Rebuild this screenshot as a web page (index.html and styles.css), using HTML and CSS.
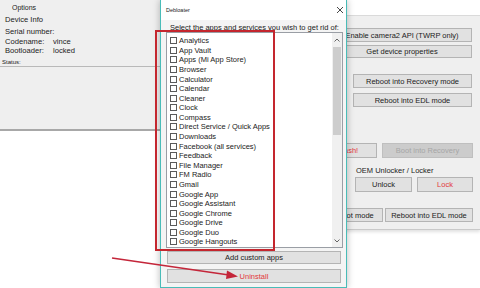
FILE: index.html
```html
<!DOCTYPE html>
<html lang="en">
<head>
  <meta charset="UTF-8" />
  <title>Debloater</title>
  <link rel="stylesheet" href="styles.css">
</head>
<body>
<div class="desktop">

  <div class="app">
    <div class="side">
      <div class="tab">Options</div>
      <div class="info">
        <div class="info-title">Device Info</div>
        <div class="info-row">Serial number:</div>
        <div class="info-row"><span class="key">Codename:</span>vince</div>
        <div class="info-row"><span class="key">Bootloader:</span>locked</div>
      </div>
      <div class="status">Status:</div>
    </div>

    <div class="tools">
      <div class="tools-head"></div>
      <div class="tools-body">
        <div class="btn wide first">Enable camera2 API (TWRP only)</div>
        <div class="btn wide second">Get device properties</div>
        <div class="btn reboot rec">Reboot into Recovery mode</div>
        <div class="btn reboot edl">Reboot into EDL mode</div>
        <div class="tool-row flash-row">
          <div class="btn red flash">Flash!</div>
          <div class="btn disabled boot-rec">Boot into Recovery</div>
        </div>
        <div class="oem-label">OEM Unlocker / Locker</div>
        <div class="tool-row oem-row">
          <div class="btn unlock">Unlock</div>
          <div class="btn red lock">Lock</div>
        </div>
        <div class="tool-row mode-row">
          <div class="btn fastboot">Reboot into Fastboot mode</div>
          <div class="btn edl-2">Reboot into EDL mode</div>
        </div>
      </div>
    </div>
  </div>

  <div class="dialog">
    <div class="dialog-title">
      <span>Debloater</span>
      <svg class="close" width="8" height="8" viewBox="0 0 8 8">
        <path d="M1 1 L7 7 M7 1 L1 7" stroke="#333" stroke-width="0.9" fill="none"/>
      </svg>
    </div>
    <div class="dialog-body">
      <div class="prompt">Select the apps and services you wish to get rid of:</div>
      <div class="listbox">
        <div class="items">
          <div class="item"><span class="box"></span>Analytics</div>
          <div class="item"><span class="box"></span>App Vault</div>
          <div class="item"><span class="box"></span>Apps (Mi App Store)</div>
          <div class="item"><span class="box"></span>Browser</div>
          <div class="item"><span class="box"></span>Calculator</div>
          <div class="item"><span class="box"></span>Calendar</div>
          <div class="item"><span class="box"></span>Cleaner</div>
          <div class="item"><span class="box"></span>Clock</div>
          <div class="item"><span class="box"></span>Compass</div>
          <div class="item"><span class="box"></span>Direct Service / Quick Apps</div>
          <div class="item"><span class="box"></span>Downloads</div>
          <div class="item"><span class="box"></span>Facebook (all services)</div>
          <div class="item"><span class="box"></span>Feedback</div>
          <div class="item"><span class="box"></span>File Manager</div>
          <div class="item"><span class="box"></span>FM Radio</div>
          <div class="item"><span class="box"></span>Gmail</div>
          <div class="item"><span class="box"></span>Google App</div>
          <div class="item"><span class="box"></span>Google Assistant</div>
          <div class="item"><span class="box"></span>Google Chrome</div>
          <div class="item"><span class="box"></span>Google Drive</div>
          <div class="item"><span class="box"></span>Google Duo</div>
          <div class="item"><span class="box"></span>Google Hangouts</div>
        </div>
        <div class="scroll">
          <div class="scroll-arrow">
            <svg width="6" height="4" viewBox="0 0 6 4"><path d="M0.5 3.5 L3 1 L5.5 3.5" stroke="#555" stroke-width="0.9" fill="none"/></svg>
          </div>
          <div class="track"><div class="thumb"></div></div>
          <div class="scroll-arrow">
            <svg width="6" height="4" viewBox="0 0 6 4"><path d="M0.5 0.5 L3 3 L5.5 0.5" stroke="#555" stroke-width="0.9" fill="none"/></svg>
          </div>
        </div>
      </div>
      <div class="btn dlg-btn add">Add custom apps</div>
      <div class="btn dlg-btn red uninstall">Uninstall</div>
    </div>
  </div>

  <!-- annotation -->
  <div class="highlight"></div>
  <svg class="arrow" width="480" height="288" viewBox="0 0 480 288">
    <path d="M112 258 L229 275" stroke="#c4263a" stroke-width="1.6" fill="none"/>
    <polygon points="238,276.5 227,270.5 226,279" fill="#c4263a"/>
  </svg>

</div>
</body>
</html>
```

FILE: styles.css
```css
body {
  margin: 0;
  font-family: "Liberation Sans", Arial, sans-serif;
  color: #222;
}

.desktop {
  position: relative;
  width: 480px;
  height: 288px;
  overflow: hidden;
  background: #fff;
}

/* main app window */
.app {
  display: flex;
  justify-content: space-between;
  align-items: flex-start;
}

.side {
  width: 160px;
  height: 131px;
  box-sizing: border-box;
  background: #efefef;
  border-bottom: 2px solid #a8a8a8;
}

.tab {
  height: 15px;
  line-height: 15px;
  padding-left: 12px;
  font-size: 7px;
}

.info {
  padding-left: 5px;
  font-size: 7.6px;
}

.info-title {
  line-height: 10px;
  margin-bottom: 2px;
}

.info-row {
  line-height: 9.6px;
}

.key {
  display: inline-block;
  width: 48px;
}

.status {
  margin-top: 2px;
  padding-left: 2px;
  line-height: 8px;
  font-size: 6px;
  border-bottom: 1px solid #b9b9b9;
}

.tools {
  width: 218px;
  height: 229px;
  background: #efefef;
  border-bottom: 1px solid #c9c9c9;
  box-shadow: 0 2px 3px rgba(0, 0, 0, 0.12);
}

.tools-head {
  height: 15px;
  background: #fff;
  border-bottom: 1px solid #dadada;
}

.tools-body {
  display: flex;
  flex-direction: column;
  align-items: flex-start;
}

.btn {
  display: flex;
  align-items: center;
  justify-content: center;
  box-sizing: border-box;
  background: #e1e1e1;
  border: 1px solid #b4b4b4;
  font-size: 7.5px;
  white-space: nowrap;
  overflow: hidden;
}

.btn.red {
  color: #e2373d;
}

.btn.disabled {
  color: #a6a6a6;
  background: #cccccc;
  border-color: #bfbfbf;
}

.wide {
  margin-left: 70px;
  width: 140px;
}

.first {
  margin-top: 12px;
  height: 14px;
}

.second {
  margin-top: 3px;
  height: 13px;
}

.reboot {
  margin-left: 91px;
  width: 119px;
  height: 14px;
}

.rec {
  margin-top: 16px;
}

.edl {
  margin-top: 5px;
}

.tool-row {
  display: flex;
}

.flash-row {
  margin-top: 36px;
  gap: 5px;
}

.flash {
  margin-left: 57px;
  width: 58px;
  height: 15px;
}

.boot-rec {
  width: 91px;
  height: 15px;
}

.oem-label {
  margin-top: 8px;
  margin-left: 94px;
  line-height: 10px;
  font-size: 7.5px;
}

.oem-row {
  margin-top: 1px;
  gap: 5px;
}

.unlock {
  margin-left: 93px;
  width: 57px;
  height: 15px;
}

.lock {
  width: 56px;
  height: 15px;
}

.mode-row {
  margin-top: 16px;
  gap: 2px;
}

.fastboot {
  margin-left: 12px;
  width: 109px;
  height: 14px;
}

.edl-2 {
  width: 88px;
  height: 14px;
}

/* Debloater dialog */
.dialog {
  position: absolute;
  left: 160px;
  top: 0;
  width: 187px;
  height: 288px;
  box-sizing: border-box;
  border: 1px solid #49bcb8;
  border-top: none;
  background: #f4f4f4;
  box-shadow: 0 0 7px rgba(0, 0, 0, 0.28);
}

.dialog-title {
  height: 20px;
  display: flex;
  align-items: center;
  justify-content: space-between;
  padding: 0 2px 0 5px;
  background: #fff;
  font-size: 5.5px;
}

.dialog-body {
  padding: 3px 3px 0 5px;
}

.prompt {
  line-height: 9px;
  font-size: 7.5px;
  padding-left: 4px;
}

.listbox {
  display: flex;
  height: 216px;
  box-sizing: border-box;
  border: 1px solid #9a9ea5;
  background: #fff;
}

.items {
  flex: 1;
  padding: 3px 0 0 3px;
  overflow: hidden;
}

.item {
  display: flex;
  align-items: center;
  height: 9.58px;
  font-size: 7.5px;
  white-space: nowrap;
}

.box {
  width: 7px;
  height: 7px;
  box-sizing: border-box;
  border: 1px solid #5a5a5a;
  background: #fff;
  margin-right: 2px;
}

.scroll {
  width: 10px;
  display: flex;
  flex-direction: column;
  background: #f0f0f0;
}

.scroll-arrow {
  height: 13px;
  display: flex;
  align-items: center;
  justify-content: center;
}

.track {
  flex: 1;
}

.thumb {
  margin: 1px 1px 0;
  height: 88px;
  background: #cdcdcd;
}

.dlg-btn {
  margin-left: 1px;
  width: 174px;
}

.add {
  margin-top: 3px;
  height: 13px;
}

.uninstall {
  margin-top: 5px;
  height: 14px;
}

/* red annotation */
.highlight {
  position: absolute;
  left: 155px;
  top: 30px;
  width: 120px;
  height: 221px;
  box-sizing: border-box;
  border: 2px solid #c4262e;
}

.arrow {
  position: absolute;
  left: 0;
  top: 0;
  pointer-events: none;
}
```
